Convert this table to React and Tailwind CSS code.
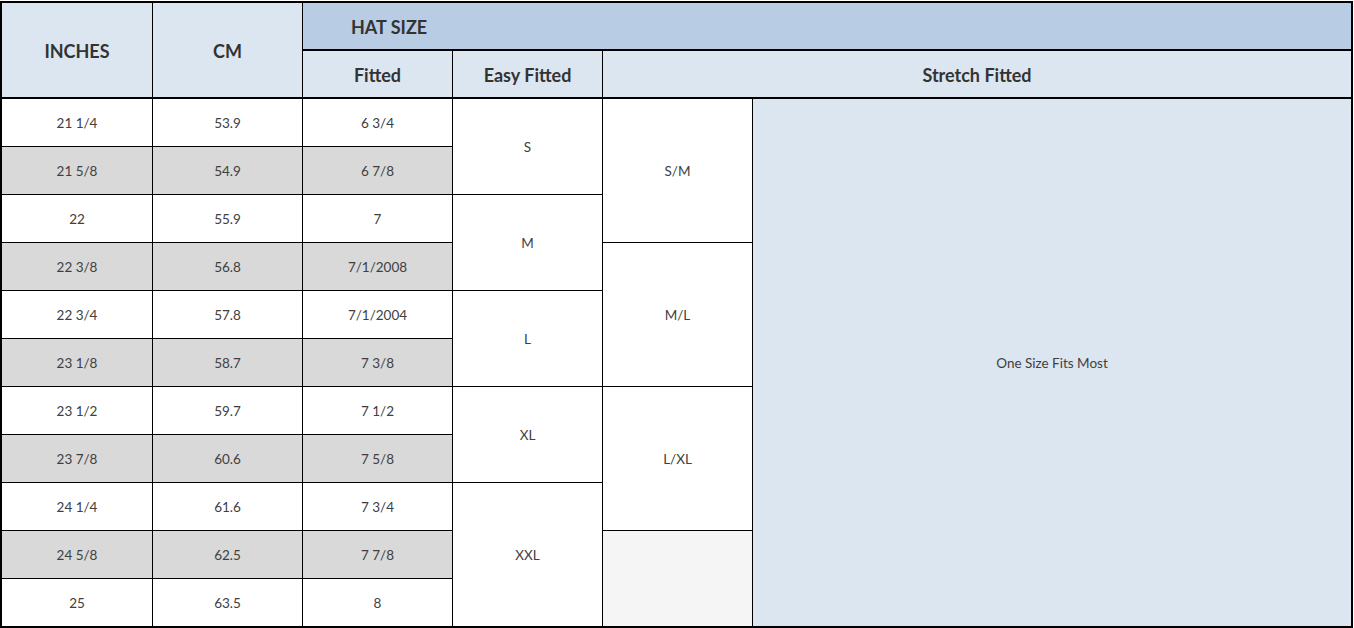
const rows = [
  ['21 1/4', '53.9', '6 3/4'],
  ['21 5/8', '54.9', '6 7/8'],
  ['22', '55.9', '7'],
  ['22 3/8', '56.8', '7/1/2008'],
  ['22 3/4', '57.8', '7/1/2004'],
  ['23 1/8', '58.7', '7 3/8'],
  ['23 1/2', '59.7', '7 1/2'],
  ['23 7/8', '60.6', '7 5/8'],
  ['24 1/4', '61.6', '7 3/4'],
  ['24 5/8', '62.5', '7 7/8'],
  ['25', '63.5', '8'],
]

const rowStart = [
  'row-start-3', 'row-start-4', 'row-start-5', 'row-start-6', 'row-start-7', 'row-start-8',
  'row-start-9', 'row-start-10', 'row-start-11', 'row-start-12', 'row-start-13',
]
const colStart = ['col-start-1', 'col-start-2', 'col-start-3']

const cell = 'flex items-center justify-center pt-[2px]'
const head = 'flex items-center justify-center pt-[2px] bg-[#dce6f1] border-b border-black text-[18px] font-bold text-[#333]'

export default function App() {
  return (
    <div className="bg-white w-[1354px] h-[628px] pt-px" style={{ fontFamily: 'Lato, "Liberation Sans", sans-serif' }}>
      <div className="w-[1353px] border-2 border-black bg-black grid grid-cols-[150px_149px_149px_149px_149px_598px] grid-rows-[repeat(13,47px)] gap-px text-[13.5px] text-[#404040]">
        <div className={`${head} col-start-1 row-start-1 row-span-2`}>INCHES</div>
        <div className={`${head} col-start-2 row-start-1 row-span-2`}>CM</div>
        <div className="flex items-center col-start-3 col-span-4 row-start-1 bg-[#b8cce4] border-b border-black pl-[48px] pt-[2px] text-[18px] font-bold text-[#333]">HAT SIZE</div>
        <div className={`${head} col-start-3 row-start-2`}>Fitted</div>
        <div className={`${head} col-start-4 row-start-2`}>Easy Fitted</div>
        <div className={`${head} col-start-5 col-span-2 row-start-2`}>Stretch Fitted</div>

        {rows.map((r, i) =>
          r.map((v, j) => (
            <div key={`${i}-${j}`} className={`${cell} ${colStart[j]} ${rowStart[i]} ${i % 2 ? 'bg-[#d9d9d9]' : 'bg-white'}`}>
              {v}
            </div>
          ))
        )}

        <div className={`${cell} col-start-4 row-start-3 row-span-2 bg-white`}>S</div>
        <div className={`${cell} col-start-4 row-start-5 row-span-2 bg-white`}>M</div>
        <div className={`${cell} col-start-4 row-start-7 row-span-2 bg-white`}>L</div>
        <div className={`${cell} col-start-4 row-start-9 row-span-2 bg-white`}>XL</div>
        <div className={`${cell} col-start-4 row-start-11 row-span-3 bg-white`}>XXL</div>

        <div className={`${cell} col-start-5 row-start-3 row-span-3 bg-white`}>S/M</div>
        <div className={`${cell} col-start-5 row-start-6 row-span-3 bg-white`}>M/L</div>
        <div className={`${cell} col-start-5 row-start-9 row-span-3 bg-white`}>L/XL</div>
        <div className="col-start-5 row-start-12 row-span-2 bg-[#f5f5f5]"></div>

        <div className={`${cell} col-start-6 row-start-3 row-span-11 bg-[#dce6f1]`}>One Size Fits Most</div>
      </div>
    </div>
  )
}
